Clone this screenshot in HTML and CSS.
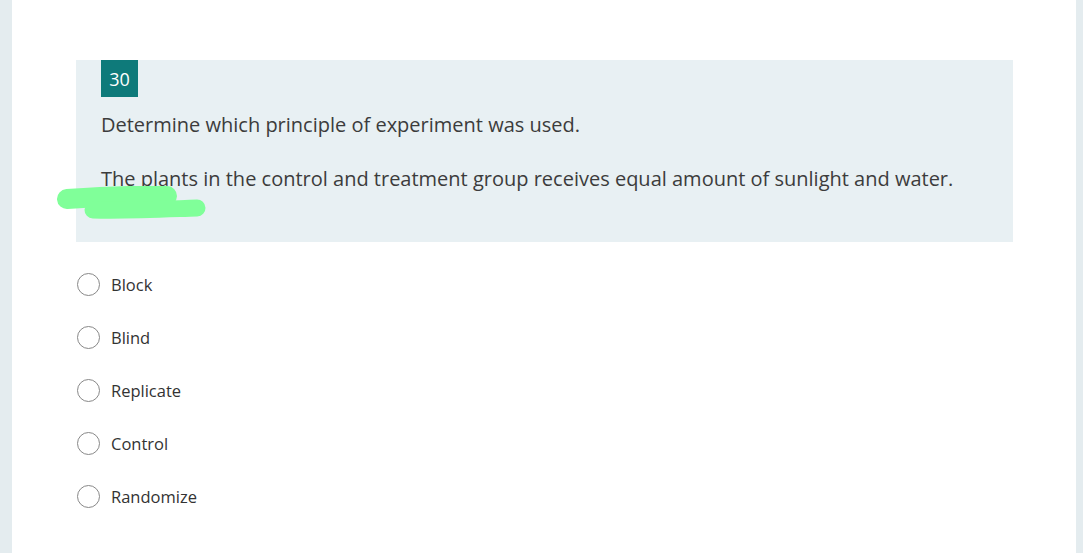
FILE: index.html
```html
<!DOCTYPE html>
<html>
<head>
<meta charset="utf-8">
<link rel="stylesheet" href="styles.css">
</head>
<body>
<div class="page">
  <main class="card">
    <section class="question">
      <div class="badge">30</div>
      <p class="q-title">Determine which principle of experiment was used.</p>
      <p class="q-text">The plants in the control and treatment group receives equal amount of sunlight and water.</p>
      <svg class="scribble" width="160" height="40" viewBox="0 0 160 40">
        <path d="M10 13 C40 11 80 9 110 10" stroke="#80ff99" stroke-width="20" stroke-linecap="round" fill="none"/>
        <path d="M36 24 C70 25 110 23 140 22" stroke="#80ff99" stroke-width="17" stroke-linecap="round" fill="none"/>
      </svg>
    </section>
    <ul class="options">
      <li class="option"><span class="radio"></span><span class="label">Block</span></li>
      <li class="option"><span class="radio"></span><span class="label">Blind</span></li>
      <li class="option"><span class="radio"></span><span class="label">Replicate</span></li>
      <li class="option"><span class="radio"></span><span class="label">Control</span></li>
      <li class="option"><span class="radio"></span><span class="label">Randomize</span></li>
    </ul>
  </main>
</div>
</body>
</html>
```
FILE: styles.css
```css
html, body {
  margin: 0;
  padding: 0;
  height: 100%;
}
body {
  background: #e4ecef;
  font-family: "Open Sans", "Noto Sans", sans-serif;
  color: #333;
}
.page {
  display: flex;
  height: 553px;
  padding: 0 7px 0 12px;
  overflow: hidden;
}
.card {
  flex: 1;
  background: #ffffff;
  padding: 60px 63px 0 64px;
}
.question {
  position: relative;
  background: #e8f0f3;
  padding: 0 25px 0 25px;
  height: 182px;
  box-sizing: border-box;
}
.badge {
  display: inline-flex;
  align-items: center;
  justify-content: center;
  width: 37px;
  height: 37px;
  background: #0e7a7a;
  color: #ffffff;
  font-family: "Open Sans", sans-serif;
  font-size: 18px;
}
.q-title, .q-text {
  margin: 0;
  font-size: 20px;
  line-height: 28px;
  color: #3c3c3c;
}
.q-title {
  margin-top: 14px;
}
.q-text {
  margin-top: 26px;
}
.scribble {
  position: absolute;
  left: -19px;
  top: 126px;
}
.options {
  list-style: none;
  margin: 0;
  padding: 16px 0 0 1px;
}
.option {
  display: flex;
  align-items: center;
  height: 53px;
  gap: 11px;
}
.radio {
  width: 21px;
  height: 21px;
  border: 1px solid #888;
  border-radius: 50%;
  background: #fff;
}
.label {
  font-size: 16.5px;
  color: #333;
}
```
